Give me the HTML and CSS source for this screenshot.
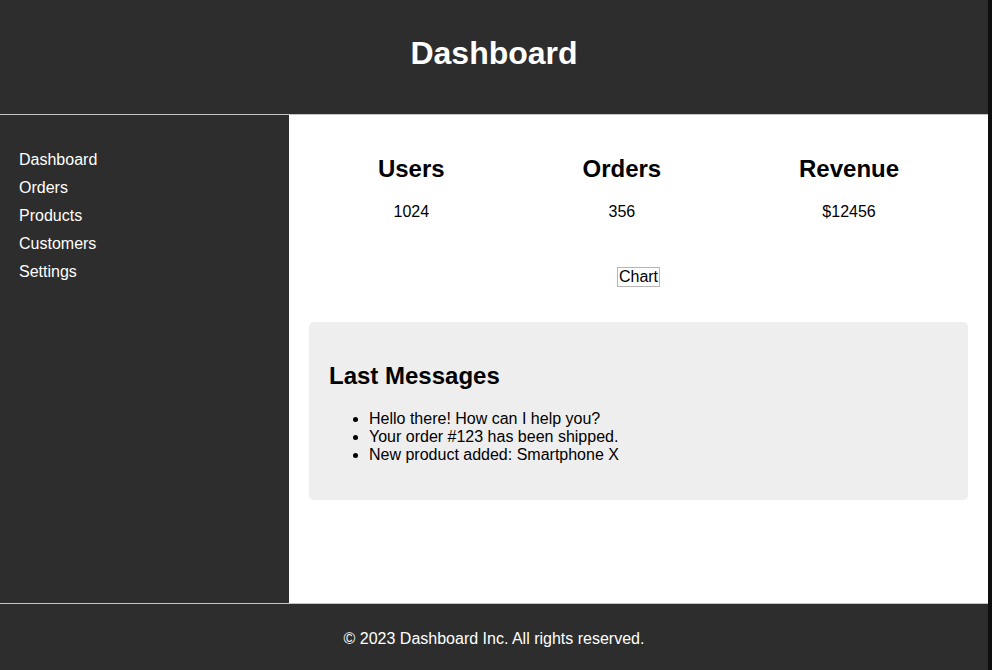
FILE: index.html
```html
<!DOCTYPE html>
<html lang="en">
<head>
<meta charset="utf-8">
<title>Dashboard</title>
<link rel="stylesheet" href="styles.css">
</head>
<body>
<div class="page">
  <header class="header">
    <h1 class="title">Dashboard</h1>
  </header>
  <div class="body-row">
    <aside class="sidebar">
      <ul class="nav">
        <li><a href="#">Dashboard</a></li>
        <li><a href="#">Orders</a></li>
        <li><a href="#">Products</a></li>
        <li><a href="#">Customers</a></li>
        <li><a href="#">Settings</a></li>
      </ul>
    </aside>
    <main class="main">
      <section class="stats">
        <div class="stat">
          <h2>Users</h2>
          <p>1024</p>
        </div>
        <div class="stat">
          <h2>Orders</h2>
          <p>356</p>
        </div>
        <div class="stat">
          <h2>Revenue</h2>
          <p>$12456</p>
        </div>
      </section>
      <div class="chart-wrap">
        <span class="chart">Chart</span>
      </div>
      <section class="messages">
        <h2>Last Messages</h2>
        <ul>
          <li>Hello there! How can I help you?</li>
          <li>Your order #123 has been shipped.</li>
          <li>New product added: Smartphone X</li>
        </ul>
      </section>
    </main>
  </div>
  <footer class="footer">
    <p>&copy; 2023 Dashboard Inc. All rights reserved.</p>
  </footer>
</div>
</body>
</html>
```

FILE: styles.css
```css
html {
  background: #0e0e0e;
}
body {
  margin: 0;
  font-family: "Liberation Sans", Arial, sans-serif;
  font-size: 16px;
  color: #000;
}
.page {
  width: 988px;
  height: 670px;
  display: flex;
  flex-direction: column;
  background: #fff;
}
.header {
  height: 115px;
  box-sizing: border-box;
  background: #2d2d2d;
  border-bottom: 1px solid #c4c4c4;
  padding-top: 35px;
  text-align: center;
}
.title {
  margin: 0;
  color: #fff;
  font-size: 32px;
  line-height: 37px;
  font-weight: bold;
}
.body-row {
  display: flex;
  height: 488px;
}
.sidebar {
  width: 289px;
  background: #2d2d2d;
  box-sizing: border-box;
  padding: 36px 20px 0 19px;
}
.nav {
  list-style: none;
  margin: 0;
  padding: 0;
}
.nav li {
  line-height: 18px;
  margin-bottom: 10px;
}
.nav a {
  color: #fff;
  text-decoration: none;
}
.main {
  flex: 1;
  padding: 20px;
  background: #fff;
}
.stats {
  display: flex;
  justify-content: space-around;
  text-align: center;
}
.stat h2 {
  font-size: 24px;
  line-height: 28px;
  margin: 20px 0 20px;
}
.stat p {
  margin: 0 0 16px;
  line-height: 18px;
}
.chart-wrap {
  text-align: center;
  margin: 30px 0 35px;
  height: 20px;
}
.chart {
  display: inline-block;
  border: 1px solid #b5b5b5;
  line-height: 18px;
  padding: 0 1px;
}
.messages {
  background: #eee;
  border-radius: 5px;
  padding: 20px;
}
.messages h2 {
  font-size: 24px;
  line-height: 28px;
  margin: 20px 0;
}
.messages ul {
  margin: 0 0 16px;
  padding-left: 40px;
  line-height: 18px;
}
.footer {
  flex: 1;
  background: #2d2d2d;
  border-top: 1px solid #c4c4c4;
  color: #fff;
  text-align: center;
  padding-top: 26px;
  box-sizing: border-box;
}
.footer p {
  margin: 0;
  line-height: 18px;
}
```
